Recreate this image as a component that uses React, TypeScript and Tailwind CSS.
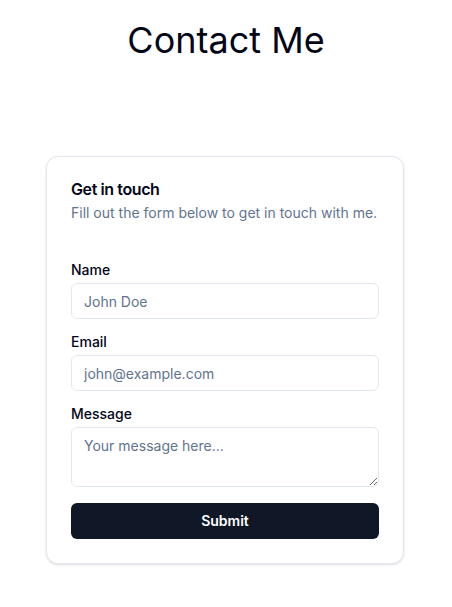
import { useState } from 'react';

export default function App() {
  const [name, setName] = useState('');
  const [email, setEmail] = useState('');
  const [message, setMessage] = useState('');

  return (
    <div className="min-h-screen bg-white font-['Inter',sans-serif] text-slate-950">
      <h1 className="pt-5 text-center text-4xl font-normal">Contact Me</h1>

      <div className="ml-[46px] mt-[96px] w-[358px] rounded-xl border border-slate-200 bg-white shadow-sm">
        {/* header */}
        <div className="flex flex-col gap-1.5 p-6">
          <h3 className="text-base font-semibold leading-none tracking-tight">Get in touch</h3>
          <p className="text-sm text-slate-500">Fill out the form below to get in touch with me.</p>
        </div>

        {/* form */}
        <form
          className="flex flex-col gap-4 px-6 pb-6 pt-4"
          onSubmit={(e) => e.preventDefault()}
        >
          <div className="flex flex-col gap-1.5">
            <label htmlFor="name" className="text-sm font-medium leading-none">
              Name
            </label>
            <input
              id="name"
              value={name}
              onChange={(e) => setName(e.target.value)}
              placeholder="John Doe"
              className="h-9 w-full rounded-md border border-slate-200 bg-transparent px-3 py-1 text-sm placeholder:text-slate-500 focus:outline-none"
            />
          </div>

          <div className="flex flex-col gap-1.5">
            <label htmlFor="email" className="text-sm font-medium leading-none">
              Email
            </label>
            <input
              id="email"
              type="email"
              value={email}
              onChange={(e) => setEmail(e.target.value)}
              placeholder="john@example.com"
              className="h-9 w-full rounded-md border border-slate-200 bg-transparent px-3 py-1 text-sm placeholder:text-slate-500 focus:outline-none"
            />
          </div>

          <div className="flex flex-col gap-1.5">
            <label htmlFor="message" className="text-sm font-medium leading-none">
              Message
            </label>
            <textarea
              id="message"
              value={message}
              onChange={(e) => setMessage(e.target.value)}
              placeholder="Your message here..."
              className="block h-[60px] w-full rounded-md border border-slate-200 bg-transparent px-3 py-2 text-sm placeholder:text-slate-500 focus:outline-none"
            />
          </div>

          <button
            type="submit"
            className="h-9 w-full rounded-md bg-gray-900 text-sm font-semibold text-white"
          >
            Submit
          </button>
        </form>
      </div>
    </div>
  );
}
